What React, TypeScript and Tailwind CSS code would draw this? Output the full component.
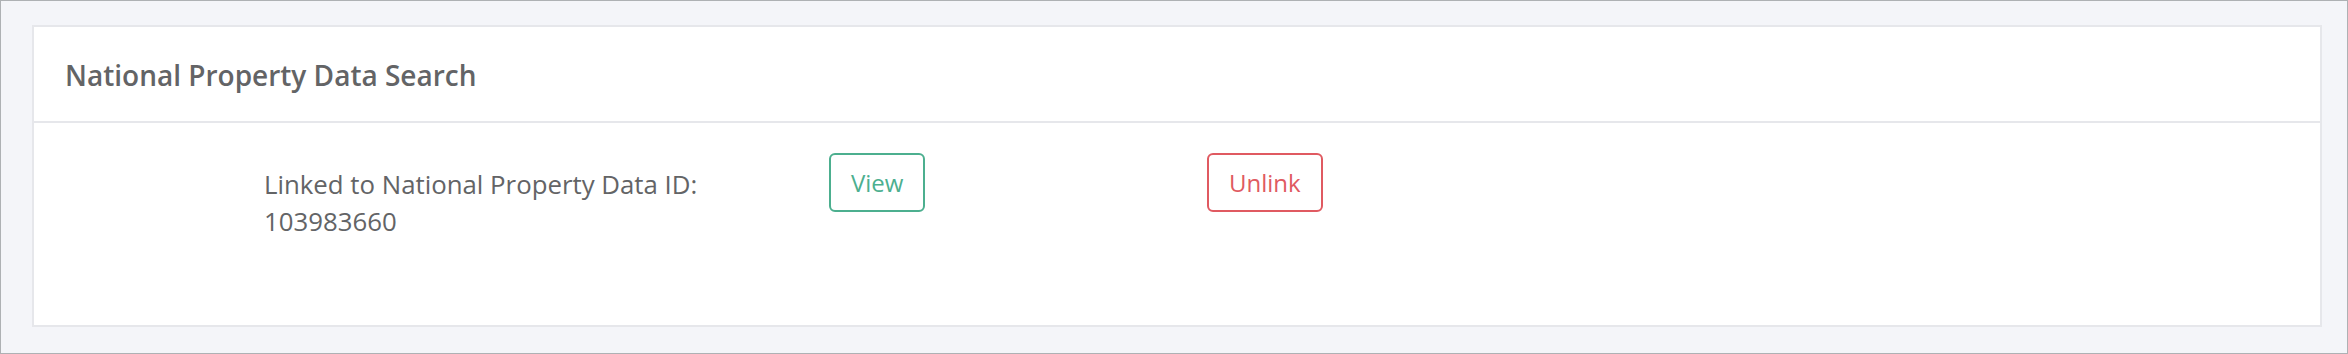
export default function App() {
  return (
    <div
      className="w-[2348px] h-[354px] border border-[#aeb1b4] bg-[#f4f5f9] pl-[31px] pr-[25px] pt-[24px]"
      style={{ fontFamily: '"Open Sans", "Noto Sans", sans-serif' }}
    >
      <div className="border-2 border-[#e6e7eb] bg-white">
        <div className="h-[96px] border-b-2 border-[#e6e7eb] pl-[31px] flex items-center">
          <h2 className="text-[28px] font-semibold text-[#636466] leading-none pt-[1px]">
            National Property Data Search
          </h2>
        </div>
        <div className="h-[202px] pt-[30px] pl-[230px] flex items-start">
          <div className="w-[565px] pt-[13px] text-[25.8px] leading-[37px] text-[#636466]">
            <div>Linked to National Property Data ID:</div>
            <div>103983660</div>
          </div>
          <div className="w-[378px]">
            <button className="h-[59px] px-[20px] border-2 border-[#4caf8f] rounded-[6px] text-[24px] text-[#4caf8f] bg-white leading-none">
              View
            </button>
          </div>
          <div>
            <button className="h-[59px] px-[20px] border-2 border-[#e05a61] rounded-[6px] text-[24px] text-[#e05a61] bg-white leading-none">
              Unlink
            </button>
          </div>
        </div>
      </div>
    </div>
  );
}
